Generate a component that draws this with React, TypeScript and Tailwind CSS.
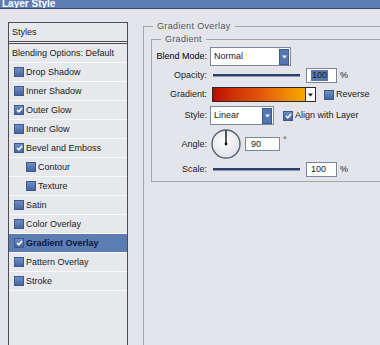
import React from "react";

const Arrow = ({ color }: { color: string }) => (
  <svg width="5" height="4" viewBox="0 0 5 4">
    <path d="M0 0.5h5L2.5 3.5z" fill={color} />
  </svg>
);

const CheckBox = ({ checked }: { checked?: boolean }) => (
  <div className="w-[10px] h-[10px] shrink-0 border border-[#3c5890] bg-linear-to-b from-[#6f8ec4] to-[#46669f] flex items-center justify-center">
    {checked && (
      <svg width="7" height="6" viewBox="0 0 7 6">
        <path d="M1 3l1.8 1.8L6 1" stroke="#fff" strokeWidth="1.6" fill="none" />
      </svg>
    )}
  </div>
);

const Dropdown = ({ value, width }: { value: string; width: string }) => (
  <div className={`${width} h-[19px] bg-white border border-[#7e889b] flex items-center justify-between`}>
    <span className="pl-[3px]">{value}</span>
    <div className="w-[10px] h-[16px] mr-[1px] bg-[#5576b0] border border-[#3b5a95] flex items-center justify-center">
      <Arrow color="#fff" />
    </div>
  </div>
);

const Slider = () => (
  <div className="ml-[3px] w-[87px] flex flex-col">
    <div className="h-[2px] bg-[#2d406b]" />
    <div className="h-px bg-[#8c99b6]" />
  </div>
);

type Effect = { name: string; checked?: boolean; indent?: boolean; active?: boolean };

const effects: Effect[] = [
  { name: "Drop Shadow" },
  { name: "Inner Shadow" },
  { name: "Outer Glow", checked: true },
  { name: "Inner Glow" },
  { name: "Bevel and Emboss", checked: true },
  { name: "Contour", indent: true },
  { name: "Texture", indent: true },
  { name: "Satin" },
  { name: "Color Overlay" },
  { name: "Gradient Overlay", checked: true, active: true },
  { name: "Pattern Overlay" },
  { name: "Stroke" },
];

export default function App() {
  return (
    <div className="w-[380px] h-[345px] overflow-hidden bg-[#e4e5ea] text-[9px] leading-[11px] text-[#1a1a1a] font-['Liberation_Sans',Arial,sans-serif] flex flex-col">
      {/* title bar */}
      <div className="h-[8px] shrink-0 bg-[#5b7db4] overflow-hidden">
        <div className="pl-[2px] -mt-[1px] text-[10px] leading-[10px] font-bold text-white">Layer Style</div>
      </div>
      <div className="h-px shrink-0 bg-[#3a4a6a]" />

      <div className="flex h-[336px]">
        {/* effects list */}
        <div className="ml-[8px] mt-[13px] w-[120px] h-[340px] shrink-0 border border-b-0 border-[#4c4c52] bg-[#e7e8ec]">
          <div className="h-[18px] pl-[3px] flex items-center">Styles</div>
          <div className="h-[3px] border-y border-[#4c4c52] bg-[#f0f0f3]" />
          <div className="h-[19px] pl-[3px] flex items-center border-b border-[#f8f8fa]">Blending Options: Default</div>
          {effects.map((e) => (
            <div
              key={e.name}
              className={`h-[19px] flex items-center border-b border-[#f8f8fa] ${e.indent ? "pl-[17px]" : "pl-[5px]"} ${e.active ? "bg-[#5c7db4] font-bold text-[#0c1838]" : ""}`}
            >
              <CheckBox checked={e.checked} />
              <span className="ml-[2px]">{e.name}</span>
            </div>
          ))}
        </div>

        {/* gradient overlay panel */}
        <fieldset className="ml-[15px] mt-[12px] w-[250px] h-[400px] shrink-0 border border-[#a3a5ac]">
          <legend className="ml-[9px] px-[4px] leading-[10px] tracking-[0.35px] text-[#555]">Gradient Overlay</legend>
          <fieldset className="ml-[7px] mt-[3px] w-[240px] pb-[4px] border border-[#a3a5ac]">
            <legend className="ml-[9px] px-[4px] leading-[10px] tracking-[0.3px] text-[#555]">Gradient</legend>

            <div className="mt-[3px] h-[19px] flex items-center">
              <span className="w-[55px] text-right text-black">Blend Mode:</span>
              <div className="ml-[3px]">
                <Dropdown value="Normal" width="w-[81px]" />
              </div>
            </div>

            <div className="mt-[2px] h-[15px] flex items-center">
              <span className="w-[55px] text-right">Opacity:</span>
              <div className="ml-[3px] flex items-center">
                <Slider />
                <div className="ml-[6px] w-[31px] h-[15px] bg-white border border-[#7c8597] flex items-center pl-[4px]">
                  <span className="bg-[#5a78ae] text-[#101a38] px-px">100</span>
                </div>
                <span className="ml-[3px]">%</span>
              </div>
            </div>

            <div className="mt-[4px] h-[15px] flex items-center">
              <span className="w-[55px] text-right">Gradient:</span>
              <div className="ml-[5px] w-[104px] h-[15px] border border-[#2b2b2b] flex">
                <div className="flex-1 bg-linear-to-r from-[#bd0000] via-[#e2520a] to-[#f8a800]" />
                <div className="w-[10px] bg-white border-l border-[#2b2b2b] flex items-center justify-center">
                  <Arrow color="#111" />
                </div>
              </div>
              <div className="ml-[8px]">
                <CheckBox />
              </div>
              <span className="ml-[2px]">Reverse</span>
            </div>

            <div className="mt-[4px] h-[19px] flex items-center">
              <span className="w-[55px] text-right">Style:</span>
              <div className="ml-[3px]">
                <Dropdown value="Linear" width="w-[64px]" />
              </div>
              <div className="ml-[9px]">
                <CheckBox checked />
              </div>
              <span className="ml-[2px]">Align with Layer</span>
            </div>

            <div className="mt-[4px] h-[30px] flex items-center">
              <span className="w-[55px] text-right">Angle:</span>
              <svg className="ml-[4px]" width="30" height="30" viewBox="0 0 30 30">
                <defs>
                  <radialGradient id="dial" cx="0.45" cy="0.4" r="0.6">
                    <stop offset="0" stopColor="#ffffff" />
                    <stop offset="1" stopColor="#dfe2e8" />
                  </radialGradient>
                </defs>
                <circle cx="15" cy="15" r="14" fill="url(#dial)" stroke="#56627a" strokeWidth="1.4" />
                <line x1="15" y1="15" x2="15" y2="1.5" stroke="#111" strokeWidth="1.4" />
                <circle cx="15" cy="15" r="1.4" fill="#111" />
              </svg>
              <div className="ml-[4px] w-[35px] h-[14px] bg-white border border-[#7c8597] flex items-center pl-[5px]">90</div>
              <span className="ml-[3px] self-start mt-[6px]">°</span>
            </div>

            <div className="mt-[3px] h-[15px] flex items-center">
              <span className="w-[55px] text-right">Scale:</span>
              <div className="ml-[3px] flex items-center">
                <Slider />
                <div className="ml-[6px] w-[31px] h-[15px] bg-white border border-[#7c8597] flex items-center pl-[4px]">100</div>
                <span className="ml-[3px]">%</span>
              </div>
            </div>
          </fieldset>
        </fieldset>
      </div>
    </div>
  );
}
